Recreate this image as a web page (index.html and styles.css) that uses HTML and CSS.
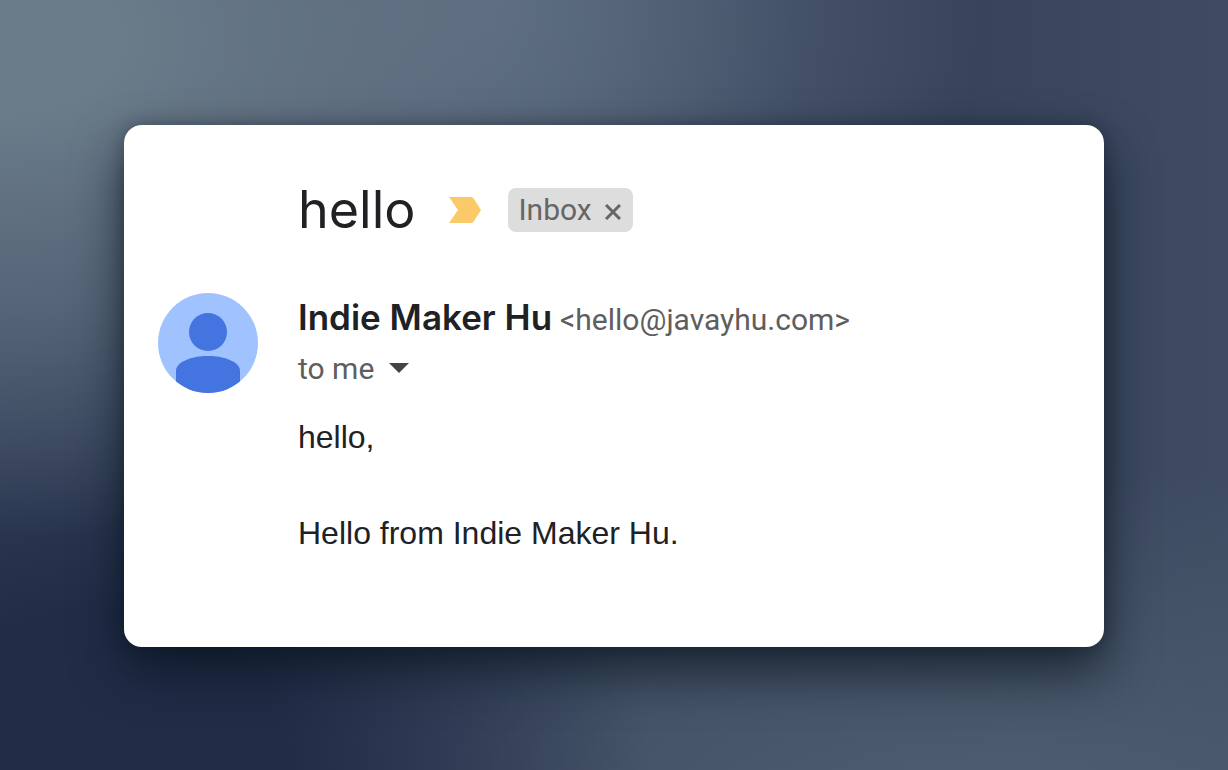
FILE: index.html
```html
<!DOCTYPE html>
<html lang="en">
<head>
  <meta charset="UTF-8">
  <meta name="viewport" content="width=device-width, initial-scale=1.0">
  <title>hello</title>
  <link rel="stylesheet" href="styles.css">
</head>
<body>
  <main class="mail">
    <header class="mail-header">
      <h1 class="subject">hello</h1>
      <svg class="important" viewBox="0 0 32 26" aria-label="Important">
        <path d="M0 0H22Q24 0 25 2L32 13L25 24Q24 26 22 26H0L9 13Z"/>
      </svg>
      <div class="label">
        <span>Inbox</span>
        <button class="label-remove" type="button" aria-label="Remove label">
          <svg viewBox="0 0 16 16"><path d="M1 1L15 15M15 1L1 15"/></svg>
        </button>
      </div>
    </header>
    <svg class="avatar" viewBox="0 0 100 100" aria-hidden="true">
      <clipPath id="circle"><circle cx="50" cy="50" r="50"/></clipPath>
      <g clip-path="url(#circle)">
        <rect class="avatar-back" width="100" height="100"/>
        <circle cx="50" cy="39" r="19"/>
        <path d="M18 100V78C18 69 33 63 50 63S82 69 82 78V100Z"/>
      </g>
    </svg>
    <div class="content">
      <div class="sender">
        <span class="name">Indie Maker Hu</span>
        <span class="email">&lt;hello@javayhu.com&gt;</span>
      </div>
      <button class="recipient" type="button">
        to me
        <svg class="arrow" viewBox="0 0 20 10"><path d="M0 0H20L10 10Z"/></svg>
      </button>
      <div class="text">
        <p>hello,</p>
        <p>Hello from Indie Maker Hu.</p>
      </div>
    </div>
  </main>
</body>
</html>
```
FILE: styles.css
```css
* {
  box-sizing: border-box;
}

body {
  margin: 0;
  min-height: 100vh;
  padding: 125px 124px 123px;
  font-family: Roboto, sans-serif;
  color: #202124;
  background:
    radial-gradient(ellipse 65% 65% at 0% 5%, #6a7b8a 15%, rgba(106, 123, 138, 0) 100%),
    radial-gradient(ellipse 40% 60% at 40% 0%, #56657a 0%, rgba(86, 101, 122, 0) 100%),
    radial-gradient(ellipse 45% 60% at 8% 100%, #212c47 35%, rgba(33, 44, 71, 0) 100%),
    radial-gradient(ellipse 75% 45% at 80% 105%, #4f5e70 0%, rgba(79, 94, 112, 0) 100%),
    linear-gradient(90deg, #3c4961, #38445c 78%, #3e4b62);
}

.mail {
  display: grid;
  grid-template-columns: 100px 1fr;
  column-gap: 40px;
  padding: 50px 34px 42px;
  align-content: start;
  background: white;
  border-radius: 18px;
  box-shadow: 0 24px 50px rgba(5, 18, 28, 0.7), 0 0 16px rgba(5, 18, 28, 0.3);
}

.mail-header {
  grid-column: 2;
  display: flex;
  align-items: center;
  height: 70px;
  margin-bottom: 48px;
}

.subject {
  margin: 0 34px 0 0;
  font-family: Inter, sans-serif;
  font-size: 52px;
  font-weight: 400;
  line-height: 70px;
}

.important {
  width: 32px;
  height: 26px;
  margin-right: 27px;
  fill: #f9ca67;
}

.label {
  display: flex;
  align-items: center;
  gap: 13px;
  height: 44px;
  padding: 0 12px 0 10px;
  border-radius: 8px;
  background: #ddd;
  color: #666;
  font-size: 30px;
  line-height: 40px;
}

.label-remove {
  display: flex;
  padding: 0;
  border: none;
  background: none;
  cursor: pointer;
}

.label-remove svg {
  width: 16px;
  height: 16px;
  margin-top: 4px;
  stroke: #666;
  stroke-width: 3;
}

.avatar {
  width: 100px;
  height: 100px;
  fill: #4374e0;
}

.avatar-back {
  fill: #a0c2ff;
}

.sender {
  display: flex;
  align-items: baseline;
  gap: 8px;
  height: 50px;
  line-height: 48px;
}

.name {
  font-family: Inter, sans-serif;
  font-size: 35px;
  font-weight: 600;
}

.email {
  font-size: 30px;
  color: #5e5e5e;
}

.recipient {
  display: flex;
  align-items: center;
  gap: 15px;
  height: 50px;
  padding: 0;
  border: none;
  background: none;
  color: #5e5e5e;
  font-family: inherit;
  font-size: 30px;
  cursor: pointer;
}

.arrow {
  width: 20px;
  height: 10px;
  fill: #444;
}

.text {
  margin-top: 20px;
  font-family: "Liberation Sans", Arial, sans-serif;
  font-size: 32px;
  line-height: 48px;
}

.text p {
  margin: 0 0 48px;
}
```
